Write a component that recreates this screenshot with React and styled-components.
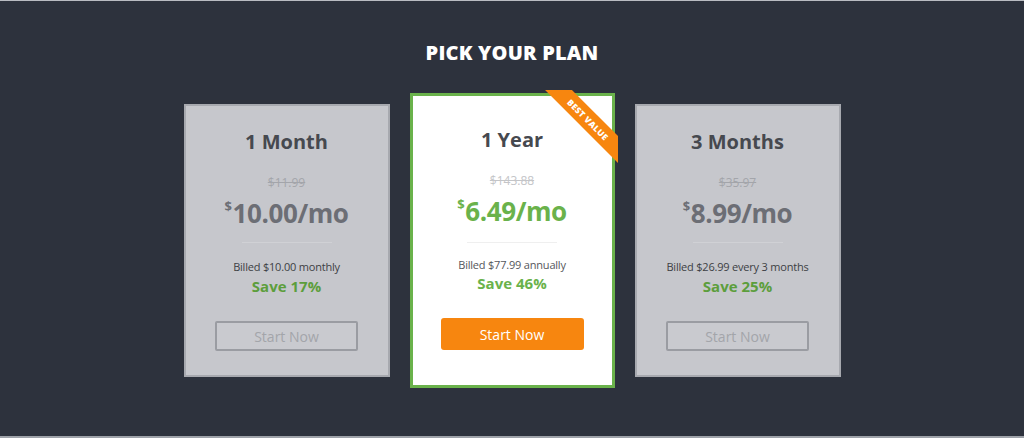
import React from "react";
import styled, { createGlobalStyle, css } from "styled-components";

const Global = createGlobalStyle`
  html, body { margin: 0; padding: 0; background: #2d323d; }
  body { font-family: "Open Sans", "Liberation Sans", sans-serif; }
`;

const Page = styled.div`
  box-sizing: border-box;
  height: 438px;
  background: #2d323d;
  border-top: 1px solid #b9bcc2;
  border-bottom: 2px solid #9ea2a9;
  display: flex;
  flex-direction: column;
  align-items: center;
`;

const Heading = styled.h1`
  margin: 38px 0 0;
  height: 28px;
  line-height: 28px;
  font-size: 20px;
  font-weight: 800;
  color: #ffffff;
  letter-spacing: 0.2px;
`;

const Row = styled.div`
  margin-top: 26px;
  display: flex;
  align-items: center;
  gap: 20px;
`;

const Card = styled.div`
  position: relative;
  box-sizing: border-box;
  display: flex;
  flex-direction: column;
  align-items: center;
  width: 206px;
  height: 273px;
  padding-top: 22px;
  background: #c6c7cc;
  border: 2px solid #a7a9af;
  ${(p) =>
    p.$featured &&
    css`
      width: 205px;
      height: 295px;
      padding-top: 30px;
      background: #ffffff;
      border: 3px solid #6ab24b;
    `}
`;

const Name = styled.div`
  height: 28px;
  line-height: 28px;
  font-size: 20px;
  font-weight: 700;
  color: #46494f;
`;

const Old = styled.div`
  margin-top: 18px;
  height: 18px;
  line-height: 18px;
  font-size: 12px;
  color: #a3a5aa;
  text-decoration: line-through;
  ${(p) => p.$featured && css`color: #c4c5c8;`}
`;

const Price = styled.div`
  margin-top: 5px;
  height: 32px;
  line-height: 32px;
  font-size: 26px;
  font-weight: 700;
  letter-spacing: -0.4px;
  color: ${(p) => (p.$featured ? "#6ab24b" : "#6c6e75")};
  sup {
    font-size: 13px;
    vertical-align: top;
    position: relative;
    top: -7px;
    margin-right: 1px;
  }
`;

const Divider = styled.div`
  margin-top: ${(p) => (p.$featured ? "15px" : "13px")};
  width: 90px;
  height: 1px;
  background: ${(p) => (p.$featured ? "#efefef" : "#d0d1d5")};
`;

const Billed = styled.div`
  margin-top: ${(p) => (p.$featured ? "14px" : "16px")};
  height: 16px;
  line-height: 16px;
  font-size: 11px;
  color: #3d3f44;
  letter-spacing: -0.2px;
  ${(p) => p.$featured && css`color: #55575c;`}
`;

const Save = styled.div`
  margin-top: ${(p) => (p.$featured ? "0px" : "1px")};
  height: 20px;
  line-height: 20px;
  font-size: 15px;
  font-weight: 700;
  color: ${(p) => (p.$featured ? "#6ab24b" : "#5c9e3c")};
`;

const Button = styled.button`
  margin-top: 25px;
  box-sizing: border-box;
  width: 143px;
  height: 30px;
  font-family: "Open Sans", "Liberation Sans", sans-serif;
  font-size: 14px;
  border-radius: 2px;
  cursor: pointer;
  color: #a3a5aa;
  background: #c9cacf;
  border: 2px solid #9a9ca2;
  ${(p) =>
    p.$featured &&
    css`
      height: 32px;
      color: #ffffff;
      background: #f7860f;
      border: none;
      border-radius: 3px;
    `}
`;

const RibbonClip = styled.div`
  position: absolute;
  top: -6px;
  right: -6px;
  width: 75px;
  height: 75px;
  overflow: hidden;
`;

const RibbonBand = styled.div`
  position: absolute;
  left: -10px;
  top: 20px;
  width: 110px;
  height: 19px;
  background: #f7860f;
  transform: rotate(45deg);
  color: #ffffff;
  font-size: 8.5px;
  font-weight: 800;
  line-height: 19px;
  text-align: center;
  letter-spacing: 0.3px;
`;

const plans = [
  { name: "1 Month", old: "$11.99", price: "10.00", billed: "Billed $10.00 monthly", save: "Save 17%" },
  { name: "1 Year", old: "$143.88", price: "6.49", billed: "Billed $77.99 annually", save: "Save 46%", featured: true },
  { name: "3 Months", old: "$35.97", price: "8.99", billed: "Billed $26.99 every 3 months", save: "Save 25%" },
];

export default function App() {
  return (
    <>
      <Global />
      <Page>
        <Heading>PICK YOUR PLAN</Heading>
        <Row>
          {plans.map((p) => (
            <Card key={p.name} $featured={p.featured}>
              {p.featured && (
                <RibbonClip>
                  <RibbonBand>BEST VALUE</RibbonBand>
                </RibbonClip>
              )}
              <Name>{p.name}</Name>
              <Old $featured={p.featured}>{p.old}</Old>
              <Price $featured={p.featured}>
                <sup>$</sup>
                {p.price}/mo
              </Price>
              <Divider $featured={p.featured} />
              <Billed $featured={p.featured}>{p.billed}</Billed>
              <Save $featured={p.featured}>{p.save}</Save>
              <Button $featured={p.featured}>Start Now</Button>
            </Card>
          ))}
        </Row>
      </Page>
    </>
  );
}
